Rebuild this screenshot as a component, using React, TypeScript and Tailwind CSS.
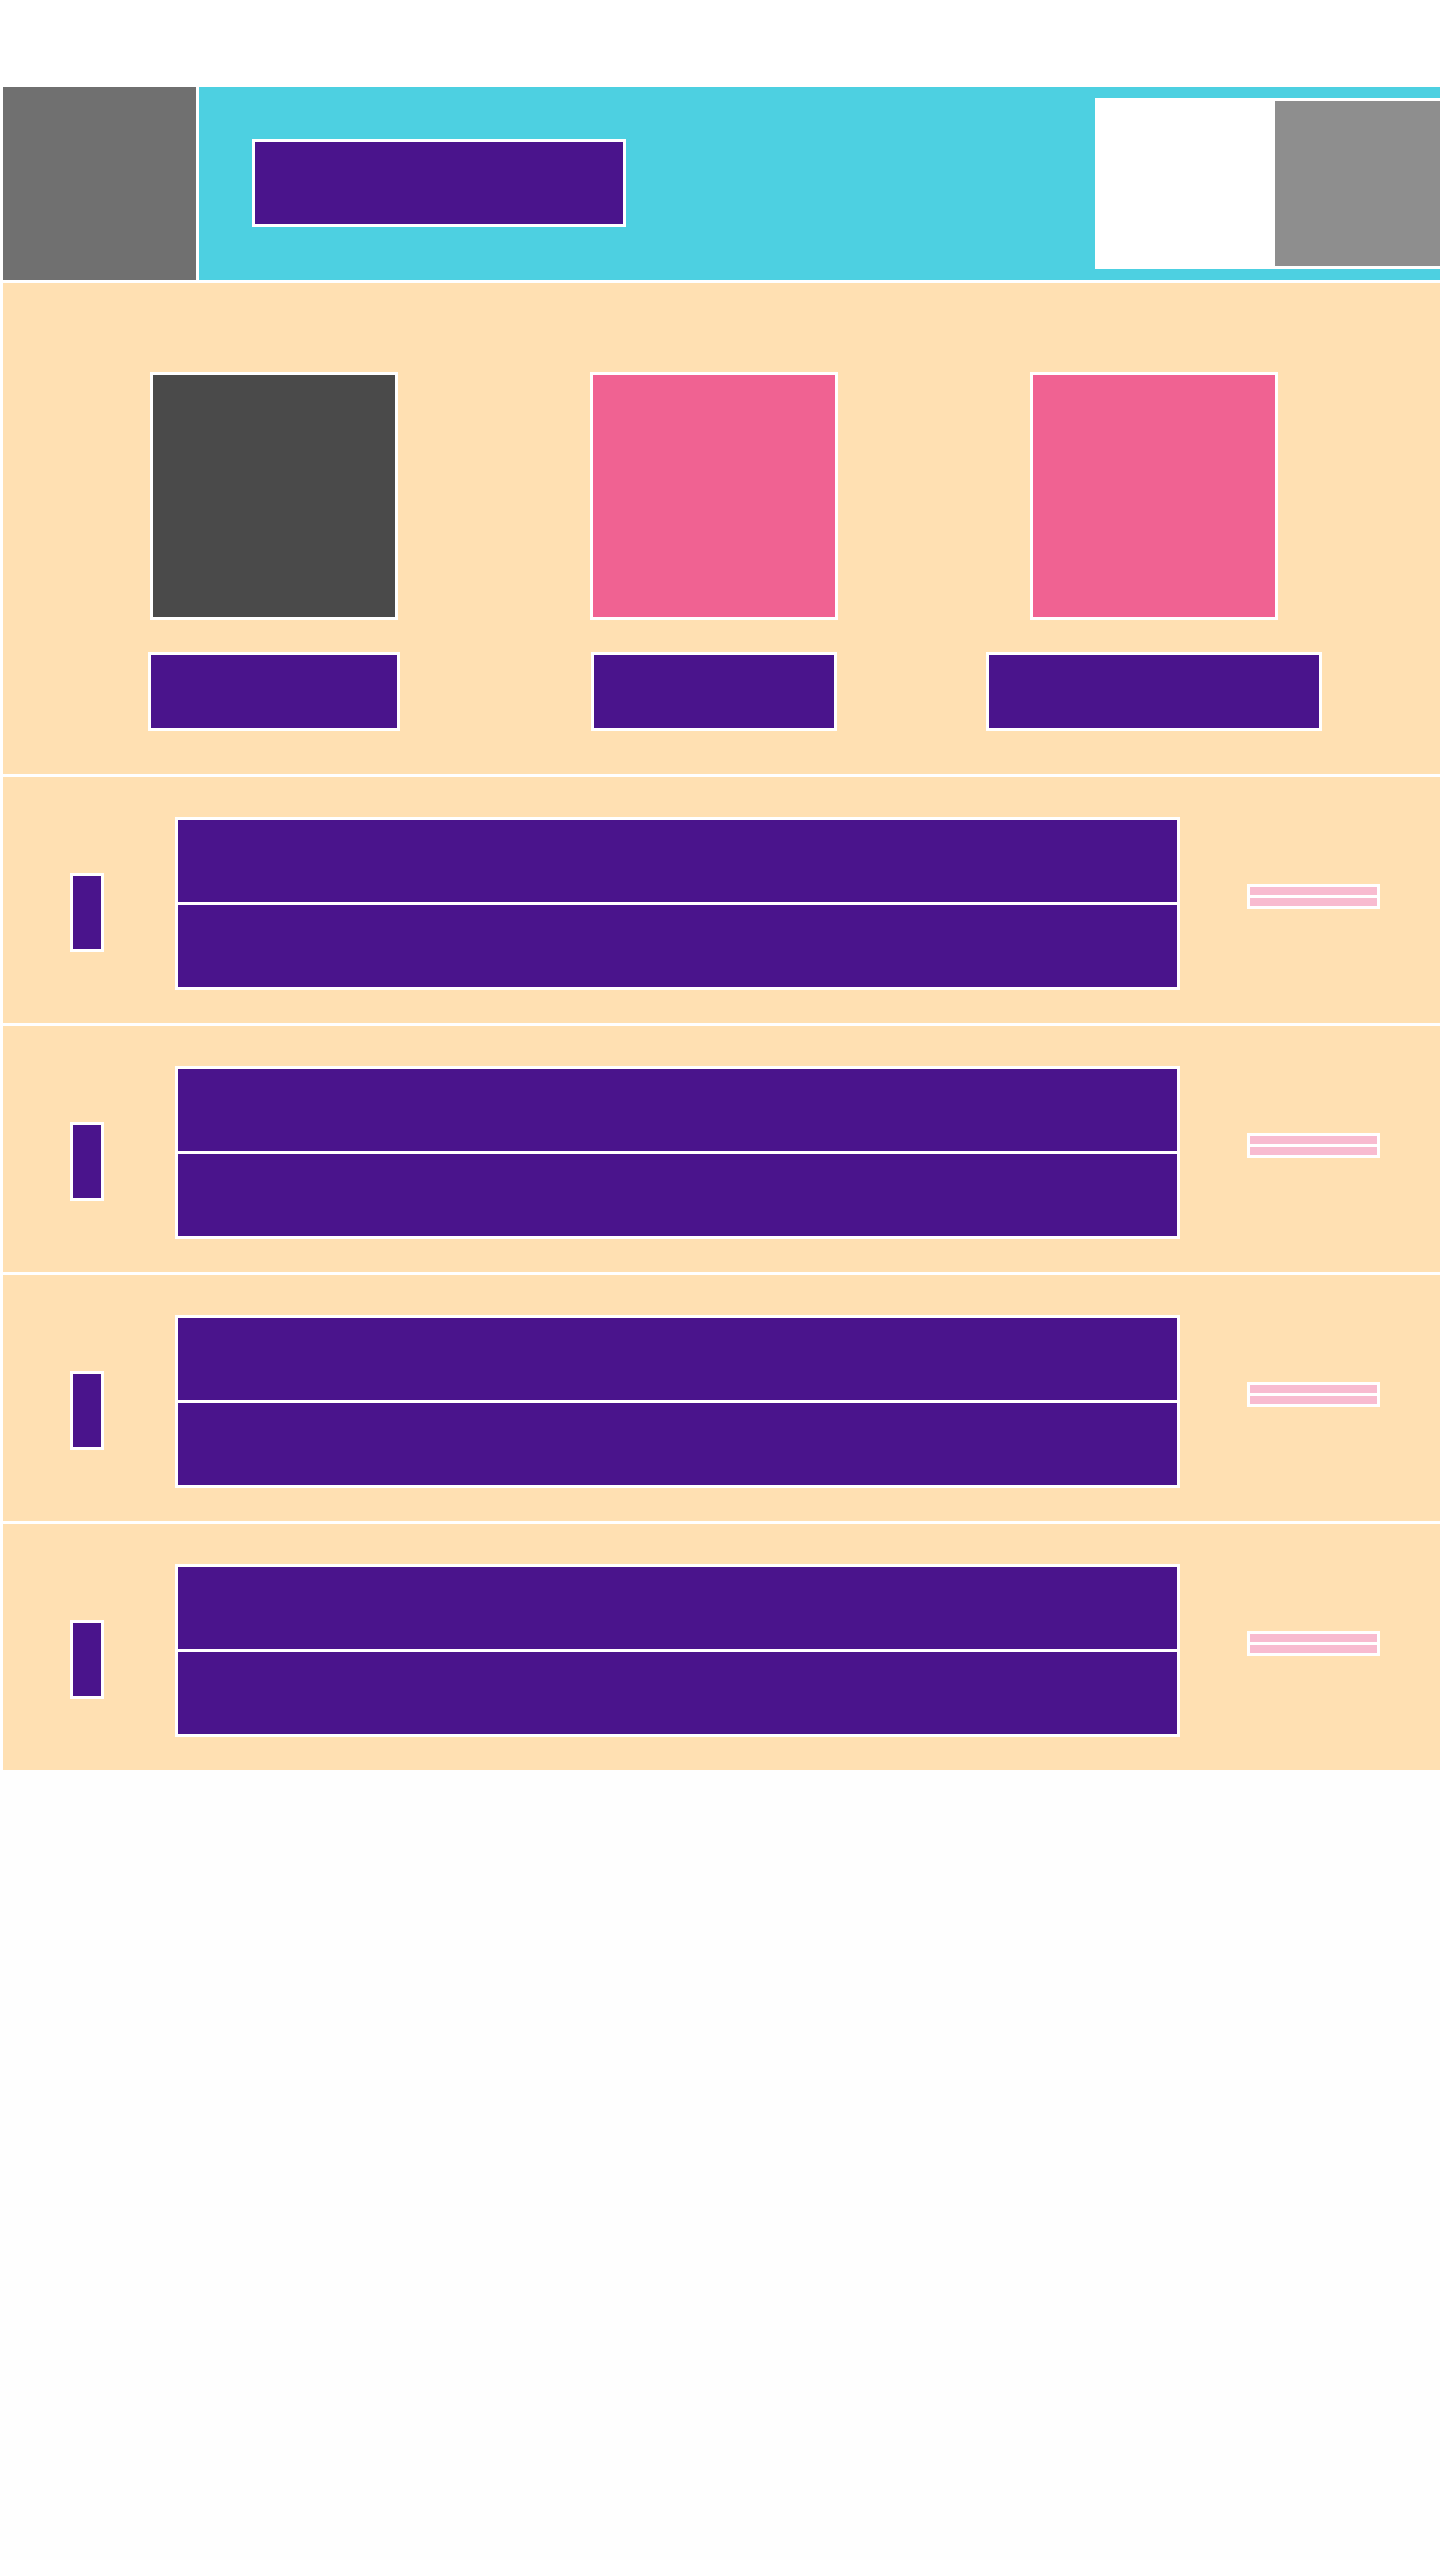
import React from "react";

function Box({ className }: { className: string }) {
  return <div className={`box-content border-[3px] border-white ${className}`} />;
}

function HeroCol({ img, btnW }: { img: string; btnW: string }) {
  return (
    <div className="flex flex-col items-center">
      <Box className={`w-[242px] h-[242px] ${img}`} />
      <Box className={`mt-[32px] h-[73px] bg-[#4a148c] ${btnW}`} />
    </div>
  );
}

function Row() {
  return (
    <div className="flex h-[246px] shrink-0 items-start bg-[#ffe0b2]">
      <Box className="ml-[67px] mt-[96px] h-[73px] w-[28px] bg-[#4a148c]" />
      <div className="ml-[71px] mt-[40px] flex w-[999px] flex-col gap-[3px] bg-white p-[3px] box-content">
        <div className="h-[82px] bg-[#4a148c]" />
        <div className="h-[82px] bg-[#4a148c]" />
      </div>
      <div className="ml-[67px] mt-[107px] flex w-[127px] flex-col gap-[3px] bg-white p-[3px] box-content">
        <div className="h-[8px] bg-[#f8bbd0]" />
        <div className="h-[8px] bg-[#f8bbd0]" />
      </div>
    </div>
  );
}

export default function App() {
  return (
    <div className="min-h-[2560px] w-full overflow-hidden bg-[#fefefe]">
      <div className="bg-white pl-[3px] pt-[87px]">
        <div className="flex w-[1440px] flex-col gap-[3px] bg-white">
          {/* header */}
          <div className="flex h-[193px] gap-[3px]">
            <div className="h-[193px] w-[193px] shrink-0 bg-[#707070]" />
            <div className="flex flex-1 items-start bg-[#4dd0e1]">
              <Box className="ml-[53px] mt-[52px] h-[82px] w-[368px] bg-[#4a148c]" />
              <div className="ml-auto mt-[11px] flex bg-white py-[3px] pl-[180px] pr-[3px]">
                <div className="h-[165px] w-[165px] bg-[#8e8e8e]" />
              </div>
            </div>
          </div>
          {/* hero */}
          <div className="grid h-[491px] grid-cols-[440px_440px_440px] bg-[#ffe0b2] pl-[51px] pt-[89px]">
            <HeroCol img="bg-[#4a4a4a]" btnW="w-[246px]" />
            <HeroCol img="bg-[#f06292]" btnW="w-[240px]" />
            <HeroCol img="bg-[#f06292]" btnW="w-[330px]" />
          </div>
          <Row />
          <Row />
          <Row />
          <Row />
        </div>
      </div>
    </div>
  );
}
